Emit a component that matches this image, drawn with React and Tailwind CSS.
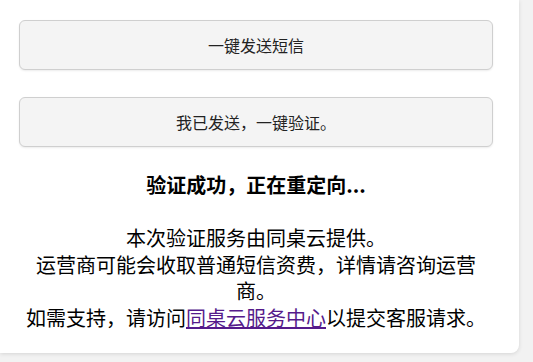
export default function App() {
  return (
    <div
      className="min-h-[362px] w-[533px] overflow-hidden bg-[#f2f2f2] text-black"
      style={{ fontFamily: '"Microsoft YaHei", "Noto Sans CJK SC", "Noto Sans", sans-serif' }}
    >
      <div className="w-[519px] rounded-br-[8px] bg-white pl-[19px] pt-[20px] pb-[22px] shadow-[0_1px_4px_rgba(0,0,0,0.12)]">
        <div className="flex w-[474px] flex-col">
          <button className="h-[50px] w-full rounded-[6px] border border-[#cfcfcf] bg-[#f4f4f4] text-[16px] text-[#222] shadow-[0_1px_2px_rgba(0,0,0,0.08)]">
            一键发送短信
          </button>
          <button className="mt-[27px] h-[50px] w-full rounded-[6px] border border-[#cfcfcf] bg-[#f4f4f4] text-[16px] text-[#222] shadow-[0_1px_2px_rgba(0,0,0,0.08)]">
            我已发送，一键验证。
          </button>
          <h3 className="mt-[24px] text-center text-[20px] font-bold leading-[28px]">
            验证成功，正在重定向...
          </h3>
          <p className="mt-[26px] text-center text-[20px] leading-[26.6px]">
            本次验证服务由同桌云提供。
            <br />
            运营商可能会收取普通短信资费，详情请咨询运营商。
            <br />
            如需支持，请访问
            <a href="#" className="text-[#551a8b] underline">
              同桌云服务中心
            </a>
            以提交客服请求。
          </p>
        </div>
      </div>
    </div>
  );
}
